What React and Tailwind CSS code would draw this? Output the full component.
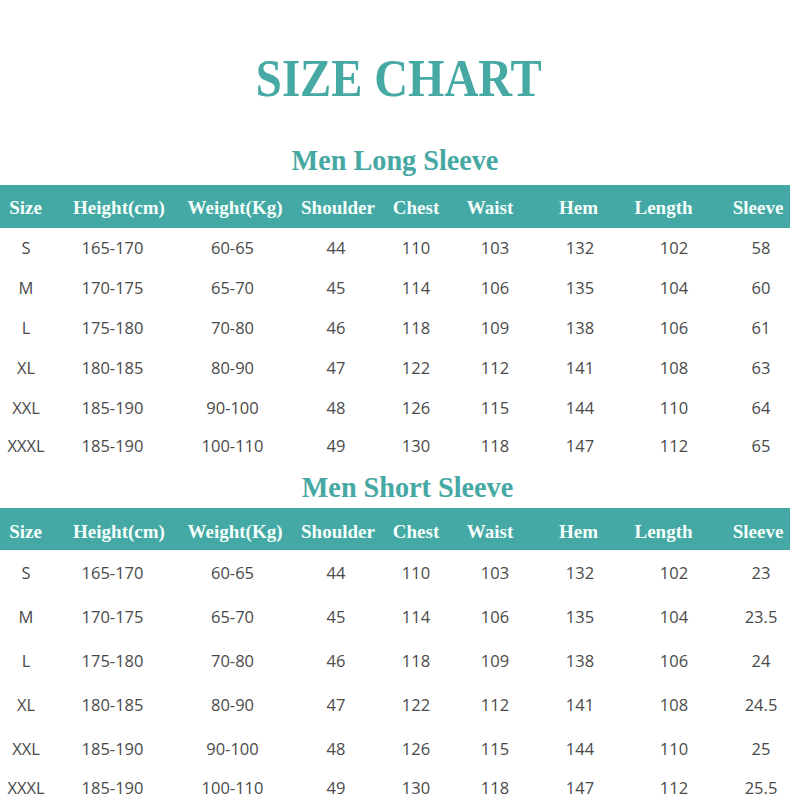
const longRows = [
  ['S', '165-170', '60-65', '44', '110', '103', '132', '102', '58'],
  ['M', '170-175', '65-70', '45', '114', '106', '135', '104', '60'],
  ['L', '175-180', '70-80', '46', '118', '109', '138', '106', '61'],
  ['XL', '180-185', '80-90', '47', '122', '112', '141', '108', '63'],
  ['XXL', '185-190', '90-100', '48', '126', '115', '144', '110', '64'],
  ['XXXL', '185-190', '100-110', '49', '130', '118', '147', '112', '65'],
];

const shortRows = [
  ['S', '165-170', '60-65', '44', '110', '103', '132', '102', '23'],
  ['M', '170-175', '65-70', '45', '114', '106', '135', '104', '23.5'],
  ['L', '175-180', '70-80', '46', '118', '109', '138', '106', '24'],
  ['XL', '180-185', '80-90', '47', '122', '112', '141', '108', '24.5'],
  ['XXL', '185-190', '90-100', '48', '126', '115', '144', '110', '25'],
  ['XXXL', '185-190', '100-110', '49', '130', '118', '147', '112', '25.5'],
];

const headers = ['Size', 'Height(cm)', 'Weight(Kg)', 'Shoulder', 'Chest', 'Waist', 'Hem', 'Length', 'Sleeve'];

// header cells and value cells are not centred on the same x, so two sets of widths
const headCols = ['w-[51px]', 'w-[136px]', 'w-[96px]', 'w-[110px]', 'w-[46px]', 'w-[102px]', 'w-[75px]', 'w-[95px]', 'w-[79px] pl-[15px]'];
const cellCols = ['w-[52px]', 'w-[121px]', 'w-[119px]', 'w-[88px]', 'w-[72px]', 'w-[86px]', 'w-[84px]', 'w-[104px]', 'w-[64px] pl-[6px]'];

const serif = "font-['Liberation_Serif','Times_New_Roman',serif]";

function SectionTitle({ children, className }) {
  return (
    <div className={`flex justify-center h-[30px] ${className}`}>
      <span className={`${serif} inline-block scale-x-[0.94] text-[30px] font-bold leading-none text-[#45a8a3] whitespace-nowrap`}>
        {children}
      </span>
    </div>
  );
}

function HeaderBar({ className }) {
  return (
    <div className={`flex items-center bg-[#44a8a4] ${className}`}>
      {headers.map((h, i) => (
        <div key={h} className={`${headCols[i]} shrink-0 flex justify-center`}>
          <span className={`${serif} text-[19px] font-bold leading-none text-[#f4fffb] whitespace-nowrap`}>{h}</span>
        </div>
      ))}
    </div>
  );
}

function Rows({ rows, rowH, lastH }) {
  return rows.map((r, ri) => (
    <div key={ri} className={`flex items-center ${ri === rows.length - 1 ? lastH : rowH}`}>
      {r.map((v, i) => (
        <div key={i} className={`${cellCols[i]} shrink-0 flex justify-center`}>
          <span className="font-['Open_Sans',sans-serif] text-[16.5px] leading-none text-[#4a4a4a] whitespace-nowrap">{v}</span>
        </div>
      ))}
    </div>
  ));
}

export default function App() {
  return (
    <div className="w-[790px] h-[804px] overflow-hidden bg-white">
      {/* big title */}
      <div className="pt-[53px] pl-[8px] flex justify-center">
        <h1 className={`${serif} inline-block scale-x-90 text-[52px] font-bold leading-none text-[#46a9a4] whitespace-nowrap`}>
          SIZE CHART
        </h1>
      </div>

      <SectionTitle className="mt-[40px]">Men Long Sleeve</SectionTitle>
      <HeaderBar className="mt-[10px] h-[43px] pt-[2px]" />
      <Rows rows={longRows} rowH="h-[40px]" lastH="h-[36px]" />

      <SectionTitle className="mt-[8px] pl-[25px]">Men Short Sleeve</SectionTitle>
      <HeaderBar className="mt-[6px] h-[42px] pt-[5px]" />
      <div className="pt-[1px]">
        <Rows rows={shortRows} rowH="h-[44px]" lastH="h-[34px]" />
      </div>
    </div>
  );
}
